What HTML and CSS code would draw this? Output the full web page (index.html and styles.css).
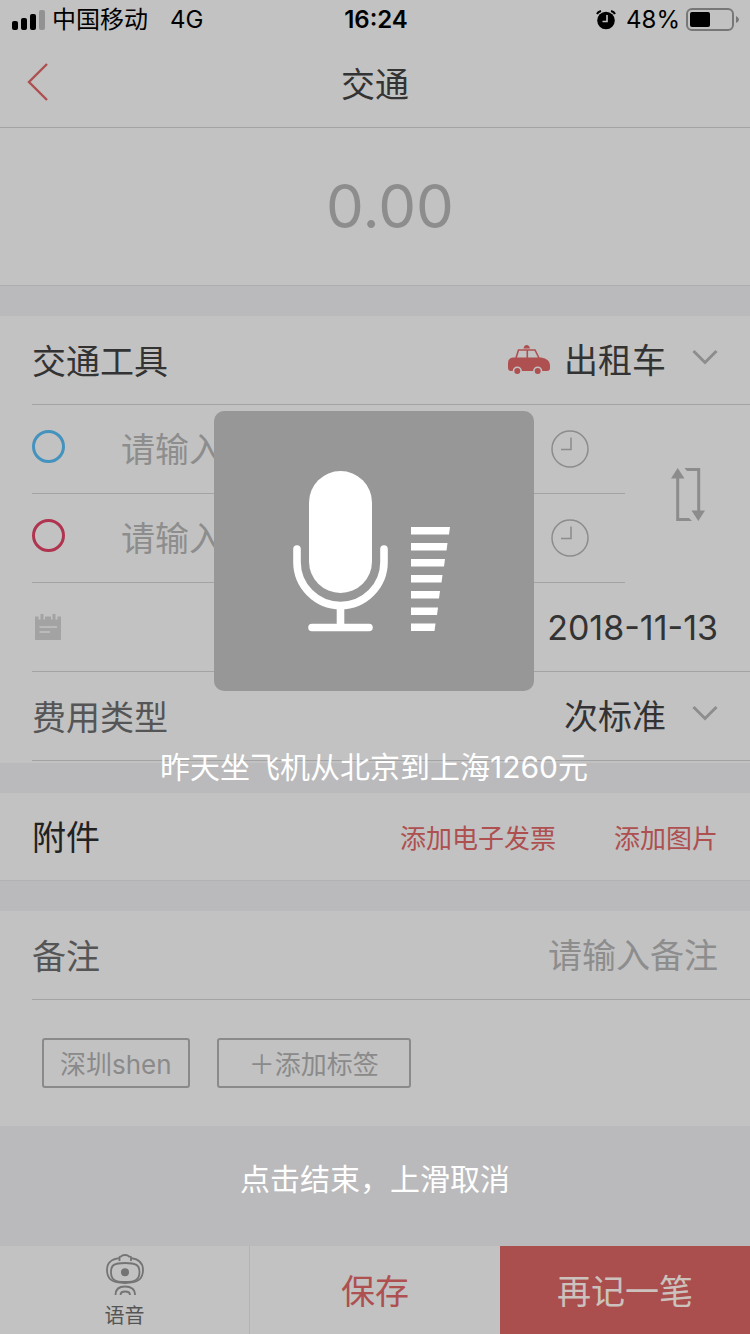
FILE: index.html
```html
<!DOCTYPE html>
<html lang="zh-CN">
<head>
<meta charset="utf-8">
<meta name="viewport" content="width=device-width, initial-scale=1">
<title>交通</title>
<link rel="stylesheet" href="styles.css">
</head>
<body>
<div class="app">
  <div class="status">
    <div class="status-side">
      <svg width="34" height="22" viewBox="0 0 34 22" aria-hidden="true">
        <rect x="0" y="12" width="6" height="9" rx="2"/>
        <rect x="9" y="9" width="6" height="12" rx="2"/>
        <rect x="18" y="5" width="6" height="16" rx="2"/>
        <rect x="27" y="1" width="6" height="20" rx="2" fill="#929292"/>
      </svg>
      <span class="carrier">中国移动</span>
      <span class="network">4G</span>
    </div>
    <span class="time">16:24</span>
    <div class="status-side status-end">
      <svg width="20" height="20" viewBox="0 0 20 20" aria-hidden="true">
        <circle cx="10" cy="10.500" r="8.800"/>
        <path d="M1 4Q2 1.800 5 1M19 4Q18 1.800 15 1" fill="none" stroke="#000" stroke-width="2"/>
        <path d="M11 5V11.500H6.500" fill="none" stroke="#c2c2c2" stroke-width="1.600"/>
      </svg>
      <span class="battery-text">48%</span>
      <svg width="54" height="24" viewBox="0 0 54 24" aria-hidden="true">
        <rect x="1" y="1" width="46" height="21" rx="5" fill="none" stroke="#777" stroke-width="2"/>
        <rect x="4" y="4" width="20" height="15" rx="2"/>
        <path d="M50 8Q53 9.500 53 11.500T50 15Z" fill="#777"/>
      </svg>
    </div>
  </div>

  <header class="nav">
    <button class="back" type="button" aria-label="返回">
      <svg width="22" height="40" viewBox="0 0 22 40" fill="none" stroke="#ae4f50" stroke-width="2.400"><path d="M20 2 2 20 20 38"/></svg>
    </button>
    <h1 class="title">交通</h1>
  </header>

  <section class="amount">
    <input class="amount-input" type="text" aria-label="金额" placeholder="0.00">
  </section>

  <section class="card details">
    <div class="row">
      <label class="label strong" for="vehicle">交通工具</label>
      <svg class="taxi" width="42" height="30" viewBox="0 0 42 30" aria-hidden="true">
        <path d="M15.500 3.500Q16 0 18.700 0T21.900 3.500Z" fill="#ae4f50"/>
        <path d="M8 13 10.500 5H27L31 13M19.300 5V13" fill="none" stroke="#ae4f50" stroke-width="1.600"/>
        <path d="M5 12.500H33Q42 14 42 20V23Q42 26 39 26H3Q0 26 0 23V18Q0 13 5 12.500Z" fill="#ae4f50"/>
        <g fill="#ae4f50" stroke="#c2c2c2" stroke-width="1.600"><circle cx="9.300" cy="26" r="3.800"/><circle cx="29.700" cy="26" r="3.800"/></g>
      </svg>
      <select class="select" id="vehicle"><option>出租车</option></select>
      <svg class="chevron" width="26" height="24" viewBox="0 0 26 24" aria-hidden="true"><path d="M1.500 3 13 14.500 24.500 3"/></svg>
    </div>

    <div class="route">
      <div class="stops">
        <div class="stop">
          <span class="dot dot-start"></span>
          <input class="stop-input" type="text" aria-label="出发地" placeholder="请输入">
          <button class="plain" type="button" aria-label="出发时间">
            <svg class="clock" width="38" height="38" viewBox="0 0 38 38"><circle cx="19" cy="19" r="18"/><path d="M20 7.500V19.500H10"/></svg>
          </button>
        </div>
        <div class="stop">
          <span class="dot dot-end"></span>
          <input class="stop-input" type="text" aria-label="目的地" placeholder="请输入">
          <button class="plain" type="button" aria-label="到达时间">
            <svg class="clock" width="38" height="38" viewBox="0 0 38 38"><circle cx="19" cy="19" r="18"/><path d="M20 7.500V19.500H10"/></svg>
          </button>
        </div>
      </div>
      <button class="swap" type="button" aria-label="交换">
        <svg width="34" height="53" viewBox="0 0 34 53" fill="#8c8c8c">
          <path d="M6.700 0 13.500 10.500H8.200V50H18L21 53H5.200V10.500H0Z"/>
          <path d="M27.300 53 20.500 42.500H26.200V3H16L13.500 0H29.200V42.500H34Z"/>
        </svg>
      </button>
    </div>

    <div class="row">
      <label class="date-label" for="date" aria-label="日期">
        <svg width="26" height="26" viewBox="0 0 26 26"><path d="M0 2.500H3.500V5.500H5.500V0H8.500V5.500H10V2.500H16V5.500H17.500V0H20.500V5.500H22.500V2.500H26V26H0Z" fill="#a3a3a3"/><path d="M4.500 13H22M4.500 18H15" stroke="#c2c2c2" stroke-width="1.500"/></svg>
      </label>
      <input class="text-input date" id="date" type="text" value="2018-11-13">
    </div>

    <div class="row">
      <label class="label" for="fee">费用类型</label>
      <select class="select" id="fee"><option>次标准</option></select>
      <svg class="chevron" width="26" height="24" viewBox="0 0 26 24" aria-hidden="true"><path d="M1.500 3 13 14.500 24.500 3"/></svg>
    </div>
  </section>

  <section class="card attach">
    <h2 class="label dark">附件</h2>
    <button class="link" type="button">添加电子发票</button>
    <button class="link" type="button">添加图片</button>
  </section>

  <section class="card notes">
    <div class="row">
      <label class="label" for="note">备注</label>
      <input class="text-input" id="note" type="text" placeholder="请输入备注">
    </div>
    <div class="tags">
      <button class="tag" type="button">深圳shen</button>
      <button class="tag tag-add" type="button">＋添加标签</button>
    </div>
  </section>

  <p class="hint">点击结束，上滑取消</p>

  <footer class="actions">
    <button class="action voice" type="button">
      <svg width="40" height="43" viewBox="0 0 40 43" fill="none" stroke="#747474" stroke-width="1.800" aria-hidden="true">
        <path d="M14.500 5.200C7 6 2 9.500 2 17C2 26 7 30 20 30S38 26 38 17C38 9.500 33 6 26 5.200"/>
        <path d="M14.500 8V4.500Q14.500 3.500 16 3.500Q17 2 20 2T24 3.500Q26 3.500 26 4.500V8"/>
        <path d="M20 10C9 10 6 12 6 19C6 26 9 29 20 29S34.500 26 34.500 19C34.500 12 31 10 20 10Z"/>
        <circle cx="20" cy="19.300" r="4" fill="#747474" stroke="none"/>
        <path d="M10.500 42C10.500 36 14 33.500 20 33.500S30 36 30 42M15.500 42C15.500 39.500 17 38.500 20 38.500S25 39.500 25 42"/>
      </svg>
      <span>语音</span>
    </button>
    <button class="action save" type="button">保存</button>
    <button class="action again" type="button">再记一笔</button>
  </footer>

  <div class="recorder" role="status">
    <div class="panel">
      <svg width="162" height="162" viewBox="79 59 162 162" fill="#fff" aria-hidden="true">
        <rect x="95" y="60" width="63" height="122" rx="31.500"/>
        <path d="M83 138V151A43.500 43.500 0 0 0 170 151V138M126.500 195V216M98 216.500H155" fill="none" stroke="#fff" stroke-width="7.600" stroke-linecap="round"/>
        <path d="M197 116H236L235 123.500H197ZM197 132H233.500L232.500 139.500H197ZM197 148H231L230 155.500H197ZM197 164H228.500L227.500 171.500H197ZM197 180H226L225 187.500H197ZM197 196.500H224L223 204H197ZM197 212.500H221.500L220.500 220H197Z"/>
      </svg>
    </div>
    <p class="transcript">昨天坐飞机从北京到上海1260元</p>
  </div>
</div>
</body>
</html>
```
FILE: styles.css
```css
* {
  box-sizing: border-box;
}

body {
  margin: 0;
  background: #bababc;
  color: #333;
  font-family: Inter, "Noto Sans CJK SC", sans-serif;
  font-size: 34px;
}

h1, h2, p {
  margin: 0;
  font-weight: 400;
}

svg {
  display: block;
  flex: none;
}

button, input, select {
  margin: 0;
  padding: 0;
  border: 0;
  background: none;
  color: inherit;
  font: inherit;
  appearance: none;
}

input::placeholder {
  color: #8d8d8d;
  opacity: 1;
}

.app {
  position: relative;
  display: flex;
  flex-direction: column;
  min-height: 100vh;
}

.status {
  display: flex;
  align-items: center;
  height: 40px;
  padding: 0 10px 0 12px;
  background: #c2c2c2;
  color: #000;
  font-size: 24px;
  line-height: 42px;
}

.status-side {
  display: flex;
  flex: 1;
  align-items: center;
}

.status-end {
  justify-content: flex-end;
}

.carrier {
  margin-left: 6px;
}

.network {
  margin-left: 22px;
}

.time {
  font-weight: 600;
}

.battery-text {
  margin: 0 6px 0 10px;
}

.nav {
  display: grid;
  grid-template-columns: 80px 1fr 80px;
  align-items: center;
  height: 88px;
  padding-bottom: 3px;
  border-bottom: 1px solid #a3a3a3;
  background: #c2c2c2;
}

.back {
  padding-left: 27px;
}

.title {
  font-size: 34px;
  text-align: center;
}

.amount {
  display: flex;
  align-items: center;
  height: 158px;
  margin-bottom: 30px;
  padding: 0 0 2px 30px;
  border-bottom: 1px solid #adadad;
  background: #c2c2c2;
}

.amount-input {
  width: 100%;
  font-size: 60px;
  text-align: center;
}

.card {
  margin-bottom: 30px;
  padding-left: 32px;
  background: #c2c2c2;
}

.details {
  padding-bottom: 2px;
}

.row {
  display: flex;
  align-items: center;
  height: 89px;
  padding-right: 32px;
  border-bottom: 1px solid #a3a3a3;
}

.label {
  flex: 1;
  padding-bottom: 2px;
  color: #555;
  font-size: 34px;
}

.strong {
  color: #333;
}

.dark {
  color: #222;
}

.taxi {
  margin-right: 14px;
}

.select {
  margin-right: 26px;
}

.chevron {
  fill: none;
  stroke: #8d8d8d;
  stroke-width: 3;
}

.route {
  display: flex;
}

.stops {
  flex: 1;
  min-width: 0;
}

.stop {
  display: flex;
  align-items: center;
  height: 89px;
  padding-right: 36px;
  border-bottom: 1px solid #a3a3a3;
}

.dot {
  flex: none;
  width: 33px;
  height: 33px;
  margin-bottom: 6px;
  border: 3px solid;
  border-radius: 50%;
}

.dot-start {
  border-color: #4492be;
}

.dot-end {
  border-color: #b03450;
}

.stop-input {
  flex: 1;
  min-width: 0;
  margin-left: 56px;
}

.clock {
  fill: none;
  stroke: #8c8c8c;
  stroke-width: 1.5;
}

.swap {
  display: flex;
  flex: none;
  align-items: center;
  justify-content: center;
  width: 125px;
}

.date-label {
  padding-left: 3px;
}

.text-input {
  flex: 1;
  min-width: 0;
  text-align: right;
}

.attach {
  display: flex;
  align-items: center;
  gap: 58px;
  height: 88px;
  padding-right: 32px;
  border-bottom: 1px solid #b2b2b2;
}

.link {
  color: #ae4f50;
  font-size: 26px;
}

.notes {
  margin-bottom: 0;
}

.tags {
  display: flex;
  gap: 27px;
  padding: 38px 10px;
}

.tag {
  height: 50px;
  padding: 0 16px 2px;
  border: 2px solid #8a8a8a;
  border-radius: 3px;
  color: #8a8a8a;
  font-size: 26px;
}

.tag-add {
  padding: 0 30px 2px;
}

.hint {
  display: flex;
  flex: 1;
  align-items: center;
  justify-content: center;
  min-height: 88px;
  padding-bottom: 18px;
  color: #fff;
  font-size: 30px;
}

.actions {
  display: grid;
  grid-template-columns: repeat(3, 1fr);
  height: 88px;
  background: #c2c2c2;
}

.action {
  padding-bottom: 2px;
}

.voice {
  display: flex;
  flex-direction: column;
  align-items: center;
  gap: 8px;
  padding-top: 7px;
  border-right: 1px solid #b4b4b4;
  color: #555;
  font-size: 20px;
  line-height: 24px;
}

.save {
  color: #ae4f50;
}

.again {
  background: #ab4f4e;
  color: #cbc2be;
}

.recorder {
  position: absolute;
  top: 411px;
  right: 0;
  left: 0;
  display: flex;
  flex-direction: column;
  align-items: center;
  gap: 54px;
  padding-right: 2px;
  color: #fff;
  font-size: 30px;
  line-height: 44px;
  text-align: center;
}

.panel {
  display: flex;
  align-items: center;
  justify-content: center;
  width: 320px;
  height: 280px;
  border-radius: 10px;
  background: #979797;
}
```
